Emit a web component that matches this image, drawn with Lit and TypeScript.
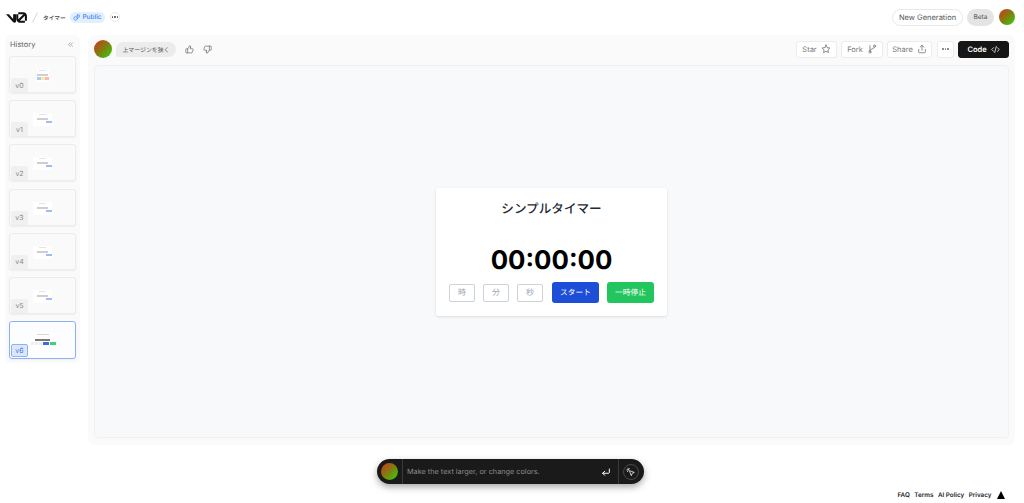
import { LitElement, html, css, svg } from "lit";
import { customElement } from "lit/decorators.js";

const ic = (body: unknown, size = 10, sw = 2) => html`<svg class="ic" width=${size} height=${size} viewBox="0 0 24 24" fill="none" stroke="currentColor" stroke-width=${sw} stroke-linecap="round" stroke-linejoin="round">${body}</svg>`;
const star = svg`<path d="M12 2.5l2.9 6.2 6.6.8-4.9 4.6 1.3 6.7L12 17.5l-5.9 3.3 1.3-6.7L2.5 9.5l6.6-.8z"/>`;
const fork = svg`<circle cx="7" cy="19" r="2.5"/><circle cx="18" cy="5" r="2.5"/><path d="M7 16.5V4"/><path d="M18 7.5c0 5-11 3-11 9"/>`;
const share = svg`<path d="M12 15V3M7.5 7.5 12 3l4.5 4.5"/><path d="M4 13v6a2 2 0 0 0 2 2h12a2 2 0 0 0 2-2v-6"/>`;
const code = svg`<path d="M7 7l-5 5 5 5M17 7l5 5-5 5M14 4l-4 16"/>`;
const up = svg`<path d="M7 10v11"/><path d="M15 5.9 14 10h5.8a2 2 0 0 1 1.9 2.6l-2.3 7A2 2 0 0 1 17.5 21H4a2 2 0 0 1-2-2v-7a2 2 0 0 1 2-2h2.8a2 2 0 0 0 1.800-1.100L12 2a3 3 0 0 1 3 3.900z"/>`;
const down = svg`<path d="M17 14V3"/><path d="M9 18.100 10 14H4.200a2 2 0 0 1-1.900-2.600l2.300-7A2 2 0 0 1 6.500 3H20a2 2 0 0 1 2 2v7a2 2 0 0 1-2 2h-2.800a2 2 0 0 0-1.800 1.100L12 22a3 3 0 0 1-3-3.900z"/>`;
const chev = svg`<path d="M11 6l-6 6 6 6M19 6l-6 6 6 6"/>`;
const dots = html`<span class="dots"><i></i><i></i><i></i></span>`;

const versions = ["v0", "v1", "v2", "v3", "v4", "v5", "v6"];

@customElement("app-root")
export class AppRoot extends LitElement {
  static styles = css`
    :host { display: block; width: 1024px; height: 503px; overflow: hidden; background: #fff;
      font-family: Inter, "Noto Sans CJK JP", sans-serif; color: #333; text-rendering: geometricPrecision; }
    * { box-sizing: border-box; }
    .ic { display: block; flex: none; }
    .dots { display: inline-flex; gap: 1px; }
    .dots i { width: 1.5px; height: 1.5px; border-radius: 50%; background: currentColor; display: block; }
    .avatar { border-radius: 50%; background: linear-gradient(135deg, #d9301c 0%, #7f7f10 50%, #2fd60a 100%); flex: none; }

    header { height: 35px; display: flex; align-items: center; padding: 0 9px 1px 6px; }
    .logo { width: 21px; height: 11px; display: block; color: #111; }
    .slash { width: 6px; height: 11px; margin: 0 5px; color: #ccc; }
    .proj { font-size: 5.700px; font-weight: 500; color: #444; width: 22px; white-space: nowrap; }
    .pub { margin-left: 5px; height: 11px; width: 35px; border-radius: 6px; background: #e3effd; color: #3b82f6;
      font-size: 6.500px; font-weight: 500; display: flex; align-items: center; justify-content: center; gap: 2px; }
    .round { margin-left: 5px; width: 10px; height: 10px; border: 1px solid #e8e8e8; border-radius: 50%; display: flex; align-items: center; justify-content: center; color: #555; }
    .spacer { flex: 1; }
    .newgen { width: 71px; height: 17px; border: 1px solid #e8e8e8; border-radius: 9px; font-size: 7.500px; color: #555;
      display: flex; align-items: center; justify-content: center; }
    .beta { margin-left: 4px; width: 27px; height: 17px; border-radius: 9px; background: #e4e4e4; font-size: 6.500px; font-weight: 500; color: #666;
      display: flex; align-items: center; justify-content: center; }
    header .avatar { margin-left: 5px; width: 16px; height: 16px; }

    .body { display: flex; gap: 8px; padding: 0 9px 0 5px; height: 410px; align-items: flex-start; }
    aside { width: 75px; background: #fafafa; border-radius: 6px; padding: 0 4px 4px; }
    .hist { height: 21px; padding: 0 2px 2px 1px; display: flex; align-items: center; justify-content: space-between; font-size: 7.500px; color: #666; }
    .hist .ic { color: #777; }
    .thumbs { display: flex; flex-direction: column; gap: 7.200px; }
    .thumb { position: relative; height: 37px; width: 67px; background: #fafafa; border: 1px solid #ececec; border-radius: 3px; box-shadow: 0 1px 2px rgba(0,0,0,.05);
      display: flex; justify-content: center; padding-top: 12px; }
    .thumb.on { height: 38px; background: #fcfdff; border-color: #8fb0f5; padding-top: 11px; }
    .tag { position: absolute; left: 1px; bottom: 0; width: 17px; height: 14px; border-radius: 2px; background: #f0f0f0; color: #888; font-size: 7px; display: flex; align-items: center; justify-content: center; }
    .on .tag { bottom: 1px; height: 13px; background: #dbe7fd; border: 1px solid #8fb0f5; color: #4b75d8; }
    .mini { width: 19px; height: 13px; display: flex; flex-direction: column; align-items: center; background: #fff; padding-top: 1px; }
    .mini .t { width: 7px; height: 1px; background: #e4e4e4; margin-bottom: 3px; }
    .mini .n { width: 11px; height: 2px; background: #cfcfcf; margin-bottom: 1px; }
    .mini .r { display: flex; width: 100%; justify-content: flex-end; }
    .mini .r i { display: block; width: 6px; height: 2px; }
    .mini.first { width: 12px; }
    .mini.first .r i { width: 4px; height: 3px; }
    .on .mini { width: 26px; height: 18px; }
    .on .mini .t { width: 12px; margin-bottom: 4px; background: #d8d8d8; }
    .on .mini .n { width: 15px; height: 2px; background: #777; margin-bottom: 1px; }
    .on .mini .r { gap: 1px; }
    .on .mini .r i { width: 6px; height: 3px; }
    .on .mini .r i.g { width: 3px; background: #eee; }

    main { width: 927px; height: 410px; background: #fafafa; border-radius: 7px; padding: 0 6px 7px; display: flex; flex-direction: column; }
    .bar { height: 28px; margin-bottom: 2px; flex: none; display: flex; align-items: center; }
    .bar .avatar { width: 18px; height: 18px; }
    .bubble { margin-left: 4px; width: 60px; height: 15px; border-radius: 8px 8px 8px 2px; background: #ececec; color: #555; font-size: 5.900px; display: flex; align-items: center; justify-content: center; white-space: nowrap; }
    .vote { margin-left: 9px; color: #666; }
    .btn { height: 17px; background: #fff; border: 1px solid #ececec; border-radius: 3px; color: #777; font-size: 7.500px; display: flex; align-items: center; justify-content: center; gap: 4px; margin-left: 4px; }
    .btn.code { background: #161616; border-color: #161616; color: #fff; width: 51px; font-weight: 600; }
    .preview { flex: 1; background: #f8f9fb; border: 1px solid #f1f1f2; border-radius: 4px; display: flex; align-items: center; justify-content: center; padding-top: 1px; }
    .card { width: 231px; height: 128px; background: #fff; border-radius: 3px; box-shadow: 0 1px 3px rgba(0,0,0,.12); padding: 0 13px; display: flex; flex-direction: column; align-items: center; }
    h1 { margin: 10px 0 0; font-size: 12.600px; font-weight: 500; line-height: 20px; color: #1f2937; font-family: "Noto Sans CJK JP", sans-serif; }
    .time { margin-top: 26px; font-size: 25.800px; font-weight: 700; line-height: 34px; color: #000; font-family: Inter, sans-serif; }
    .ctrls { margin-top: 4px; width: 100%; display: flex; align-items: center; gap: 8px; }
    .inp { width: 26px; height: 18px; border: 1px solid #cfd2d8; border-radius: 2px; color: #9ca3af; font-size: 8px; display: flex; align-items: center; justify-content: center; }
    .act { width: 47px; height: 21px; border-radius: 3px; color: #fff; font-size: 7.700px; display: flex; align-items: center; justify-content: center; }
    .act.blue { background: #1d4ed8; margin-left: 1px; }
    .act.green { background: #22c55e; }

    .prompt { margin: 14px 0 0 377px; width: 267px; height: 25px; border-radius: 13px; background: #1a1a1a; box-shadow: 0 3px 7px rgba(0,0,0,.35); display: flex; align-items: center; color: #fff; }
    .prompt .avatar { width: 17px; height: 17px; margin-left: 4px; }
    .prompt .sep { width: 1px; height: 25px; background: #3a3a3a; flex: none; }
    .prompt .l { margin-left: 4px; }
    .ph { flex: 1; font-size: 7.300px; color: #8b8b8b; padding-left: 4px; white-space: nowrap; }
    .enter { margin-right: 7px; }
    .pick { width: 16px; height: 16px; border: 1px solid #4a4a4a; border-radius: 50%; margin: 0 5px 0 4px; display: flex; align-items: center; justify-content: center; }

    footer { height: 16px; padding: 5px 19px 0 0; display: flex; justify-content: flex-end; align-items: center; gap: 4.500px; font-size: 6.300px; font-weight: 600; color: #222; }
    .tri { width: 0; height: 0; border-left: 4.500px solid transparent; border-right: 4.500px solid transparent; border-bottom: 8px solid #000; margin-left: 1px; }
  `;

  private mini(i: number) {
    if (i === 6) {
      return html`<div class="mini"><div class="t"></div><div class="n"></div>
        <div class="r"><i class="g"></i><i class="g"></i><i class="g"></i><i style="background:#3f6ae0"></i><i style="background:#3fd078"></i></div></div>`;
    }
    const cols = i === 0 ? ["#a9cdfb", "#fde9a0", "#fbb8b8"] : ["#9dbbf5"];
    return html`<div class="mini ${i === 0 ? "first" : ""}"><div class="t"></div><div class="n"></div>
      <div class="r">${cols.map((c) => html`<i style="background:${c}"></i>`)}</div></div>`;
  }

  render() {
    return html`
      <header>
        <svg class="logo" viewBox="0 0 40 20" fill="currentColor"><path d="M23.39 0h9.53c3.86 0 6.99 3.13 6.99 7v9.080H36V7c0-.1 0-.19-.01-.28l-9.530 9.360h.1H36v3.700h-9.440c-3.860 0-7.080-3.160-7.080-7.030V3.690h3.910v9.060c0 .18.010.35.040.52l9.740-9.570c-.08 0-.16-.01-.25-.01h-9.530z"/><path d="M13.770 19.100 0 3.690h5.540l8.080 9.050V3.690h5.470v13.900c0 2.100-2.670 2.910-5.320 1.510z"/></svg>
        <svg class="slash" viewBox="0 0 6 11" fill="none" stroke="currentColor" stroke-width=".8"><path d="M5.500.5.500 10.500"/></svg>
        <span class="proj">タイマー</span>
        <span class="pub">${ic(svg`<circle cx="9" cy="15" r="6"/><rect x="14" y="3" width="8" height="8" rx="1"/>`, 7, 2.4)}Public</span>
        <span class="round">${dots}</span>
        <span class="spacer"></span>
        <span class="newgen">New Generation</span>
        <span class="beta">Beta</span>
        <span class="avatar"></span>
      </header>
      <div class="body">
        <aside>
          <div class="hist"><span>History</span>${ic(chev, 7, 2)}</div>
          <div class="thumbs">
            ${versions.map((v, i) => html`<div class="thumb ${i === 6 ? "on" : ""}">${this.mini(i)}<span class="tag">${v}</span></div>`)}
          </div>
        </aside>
        <main>
          <div class="bar">
            <span class="avatar"></span>
            <span class="bubble">上マージンを狭く</span>
            <span class="vote">${ic(up, 9, 1.8)}</span>
            <span class="vote">${ic(down, 9, 1.8)}</span>
            <span class="spacer"></span>
            <span class="btn" style="width:41px">Star ${ic(star)}</span>
            <span class="btn" style="width:42px">Fork ${ic(fork)}</span>
            <span class="btn" style="width:45px">Share ${ic(share)}</span>
            <span class="btn" style="width:17px;margin-left:5px">${dots}</span>
            <span class="btn code">Code ${ic(code, 9)}</span>
          </div>
          <div class="preview">
            <div class="card">
              <h1>シンプルタイマー</h1>
              <div class="time">00:00:00</div>
              <div class="ctrls">
                <span class="inp">時</span><span class="inp">分</span><span class="inp">秒</span>
                <span class="act blue">スタート</span><span class="act green">一時停止</span>
              </div>
            </div>
          </div>
        </main>
      </div>
      <div class="prompt">
        <span class="avatar"></span>
        <span class="sep l"></span>
        <span class="ph">Make the text larger, or change colors.</span>
        <span class="enter">${ic(svg`<path d="M20 5v8a2 2 0 0 1-2 2H4"/><path d="M9 10l-5 5 5 5"/>`, 10, 2.4)}</span>
        <span class="sep"></span>
        <span class="pick">${ic(svg`<path d="M9 9l11 4-5 2-2 5z"/><path d="M5 3v3M2 7h3M8 4l-1.500 2M3 11l2-1.500"/>`, 10, 1.800)}</span>
      </div>
      <footer><span>FAQ</span><span>Terms</span><span>AI Policy</span><span>Privacy</span><span class="tri"></span></footer>
    `;
  }
}
